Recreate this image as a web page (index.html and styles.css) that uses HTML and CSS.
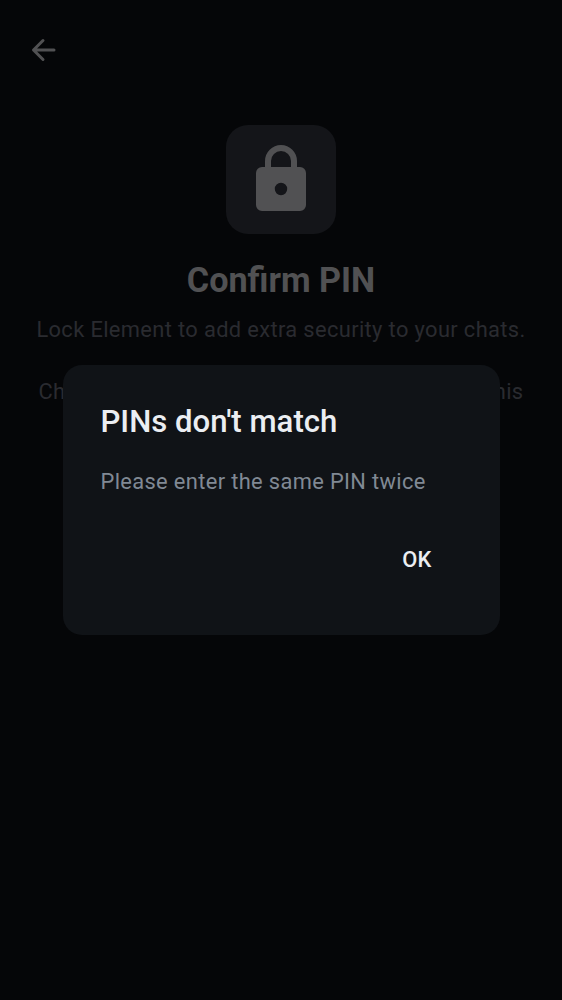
FILE: index.html
```html
<!DOCTYPE html>
<html lang="en">
<head>
<meta charset="utf-8">
<title>Confirm PIN</title>
<link rel="stylesheet" href="styles.css">
</head>
<body>
<main class="screen">
  <header class="topbar">
    <svg class="back" width="26" height="24" viewBox="0 0 26 24" aria-label="Back"><path d="M23 12H2.6M12 2.5 2.5 12l9.5 9.5"/></svg>
  </header>
  <section class="intro">
    <div class="lock-tile">
      <svg width="50" height="66" viewBox="0 0 50 66">
        <path class="shackle" d="M12 24v-8a13 13 0 0 1 26 0v8"/>
        <path class="lock-body" fill-rule="evenodd" d="M6 22h38a6 6 0 0 1 6 6v32a6 6 0 0 1-6 6H6a6 6 0 0 1-6-6V28a6 6 0 0 1 6-6zM25 37.8a6.2 6.2 0 1 0 0 12.4 6.2 6.2 0 0 0 0-12.4z"/>
      </svg>
    </div>
    <h1 class="heading">Confirm PIN</h1>
    <p class="description">Lock Element to add extra security to your chats.<br><br>Choose something memorable. If you forget this</p>
  </section>
</main>
<div class="overlay">
  <div class="dialog" role="alertdialog">
    <h2 class="dialog-title">PINs don't match</h2>
    <p class="dialog-text">Please enter the same PIN twice</p>
    <button class="ok">OK</button>
  </div>
</div>
</body>
</html>
```
FILE: styles.css
```css
* { box-sizing: border-box; }
body {
  margin: 0;
  background: #050608;
  font-family: Roboto, sans-serif;
}
.screen {
  height: 1000px;
  overflow: hidden;
}
.topbar {
  height: 125px;
  padding: 38px 0 0 31px;
}
.back {
  display: block;
  fill: none;
  stroke: #515153;
  stroke-width: 3;
  stroke-linecap: round;
  stroke-linejoin: round;
}
.intro {
  display: flex;
  flex-direction: column;
  align-items: center;
}
.lock-tile {
  width: 110px;
  height: 109px;
  padding-top: 20px;
  border-radius: 22px;
  background: #141519;
  display: flex;
  justify-content: center;
}
.shackle {
  fill: none;
  stroke: #515153;
  stroke-width: 6;
}
.lock-body { fill: #515153; }
.heading {
  margin: 25px 0 0;
  font-size: 34.2px;
  line-height: 42px;
  font-weight: 700;
  color: #515153;
}
.description {
  margin: 13px 0 0;
  font-size: 21.875px;
  line-height: 31px;
  letter-spacing: 0.36px;
  text-align: center;
  white-space: nowrap;
  color: #2a2b30;
}
.overlay {
  position: absolute;
  inset: 0;
  display: flex;
  align-items: center;
  justify-content: center;
}
.dialog {
  width: 437px;
  height: 270px;
  padding: 37px 38px;
  border-radius: 19px;
  background: #101317;
  display: flex;
  flex-direction: column;
}
.dialog-title {
  margin: 0;
  font-size: 31.15px;
  line-height: 40px;
  font-weight: 500;
  color: #ebeef2;
}
.dialog-text {
  margin: 24px 0 0;
  font-size: 21.875px;
  line-height: 32px;
  letter-spacing: 0.35px;
  white-space: nowrap;
  color: #808994;
}
.ok {
  align-self: flex-end;
  margin: 46px 30px 0 0;
  padding: 0;
  border: 0;
  background: none;
  font: 500 21.875px/32px Roboto, sans-serif;
  letter-spacing: 0.16px;
  color: #ebeef2;
}
```
